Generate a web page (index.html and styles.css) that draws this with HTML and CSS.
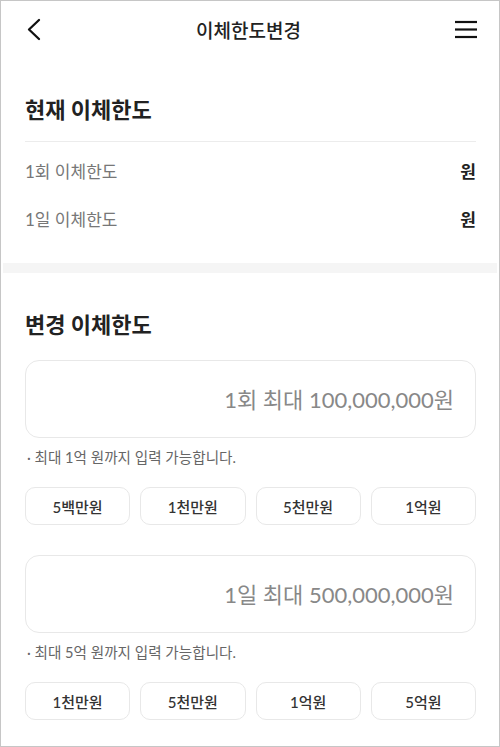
FILE: index.html
```html
<!DOCTYPE html>
<html lang="ko">
<head>
    <meta charset="UTF-8">
    <meta name="viewport" content="width=device-width, initial-scale=1.0">
    <title>이체한도변경</title>
    <link rel="stylesheet" href="styles.css">
</head>
<body>
    <div class="frame">
        <!-- 상단 헤더 -->
        <div class="header">
            <svg class="back" width="16" height="24" viewBox="0 0 16 24">
                <polyline points="12,2 2,11.5 12,21" fill="none" stroke="#111" stroke-width="2.3" stroke-linecap="round" stroke-linejoin="round"/>
            </svg>
            <h1 class="title">이체한도변경</h1>
            <svg class="menu" width="24" height="20" viewBox="0 0 24 20">
                <line x1="1" y1="2" x2="23" y2="2" stroke="#111" stroke-width="2.2"/>
                <line x1="1" y1="9.5" x2="23" y2="9.5" stroke="#111" stroke-width="2.2"/>
                <line x1="1" y1="17" x2="23" y2="17" stroke="#111" stroke-width="2.2"/>
            </svg>
        </div>

        <!-- 현재 이체한도 -->
        <div class="section current">
            <h2 class="sec-title">현재 이체한도</h2>
            <div class="row">
                <span class="label">1회 이체한도</span>
                <span class="value">원</span>
            </div>
            <div class="row">
                <span class="label">1일 이체한도</span>
                <span class="value">원</span>
            </div>
        </div>

        <div class="band"></div>

        <!-- 변경 이체한도 -->
        <div class="section change">
            <h2 class="sec-title">변경 이체한도</h2>

            <div class="group">
                <div class="amount">1회 최대 100,000,000원</div>
                <p class="note">· 최대 1억 원까지 입력 가능합니다.</p>
                <div class="quick">
                    <button class="btn">5백만원</button>
                    <button class="btn">1천만원</button>
                    <button class="btn">5천만원</button>
                    <button class="btn">1억원</button>
                </div>
            </div>

            <div class="group">
                <div class="amount">1일 최대 500,000,000원</div>
                <p class="note">· 최대 5억 원까지 입력 가능합니다.</p>
                <div class="quick">
                    <button class="btn">1천만원</button>
                    <button class="btn">5천만원</button>
                    <button class="btn">1억원</button>
                    <button class="btn">5억원</button>
                </div>
            </div>
        </div>
    </div>
</body>
</html>
```

FILE: styles.css
```css
html, body, h1, h2, p {
  margin: 0;
  padding: 0;
}
body {
  font-family: Lato, "Noto Sans CJK KR", sans-serif;
  background: #fff;
  color: #222;
}
.frame {
  width: 500px;
  height: 747px;
  box-sizing: border-box;
  border: 1px solid #c6c6c6;
  overflow: hidden;
}
.header {
  height: 57px;
  display: flex;
  align-items: center;
  justify-content: space-between;
  padding: 0 21px 0 26px;
}
.back {
  margin-top: 1px;
}
.title {
  font-size: 19px;
  font-weight: 500;
  color: #222;
}
.menu {
  margin-top: 1px;
}
.section {
  padding: 0 23px 0 24px;
}
.sec-title {
  font-size: 22px;
  font-weight: 700;
  line-height: 30px;
  color: #222;
  margin-top: 37px;
}
.current .sec-title {
  padding-bottom: 16px;
  border-bottom: 1px solid #ececec;
  margin-bottom: 4px;
}
.current {
  padding-bottom: 21px;
}
.row {
  height: 48px;
  display: flex;
  align-items: center;
  justify-content: space-between;
}
.label {
  font-size: 17px;
  color: #777;
}
.value {
  font-size: 17px;
  font-weight: 700;
  color: #222;
}
.band {
  height: 10px;
  margin: 0 2px;
  background: #f5f5f5;
}
.change .sec-title {
  margin-bottom: 20px;
}
.group {
  margin-bottom: 30px;
}
.amount {
  height: 78px;
  box-sizing: border-box;
  border: 1px solid #e8e8e8;
  border-radius: 14px;
  display: flex;
  align-items: center;
  justify-content: flex-end;
  padding: 0 21px 3px 0;
  font-size: 22px;
  color: #888;
}
.note {
  margin-top: 10px;
  line-height: 20px;
  font-size: 14.6px;
  color: #666;
  padding-left: 2px;
}
.quick {
  margin-top: 19px;
  display: grid;
  grid-template-columns: repeat(4, 1fr);
  gap: 10px;
}
.btn {
  height: 38px;
  background: #fff;
  border: 1px solid #e8e8e8;
  border-radius: 10px;
  font-family: Lato, "Noto Sans CJK KR", sans-serif;
  font-size: 15px;
  font-weight: 500;
  color: #333;
}
```
